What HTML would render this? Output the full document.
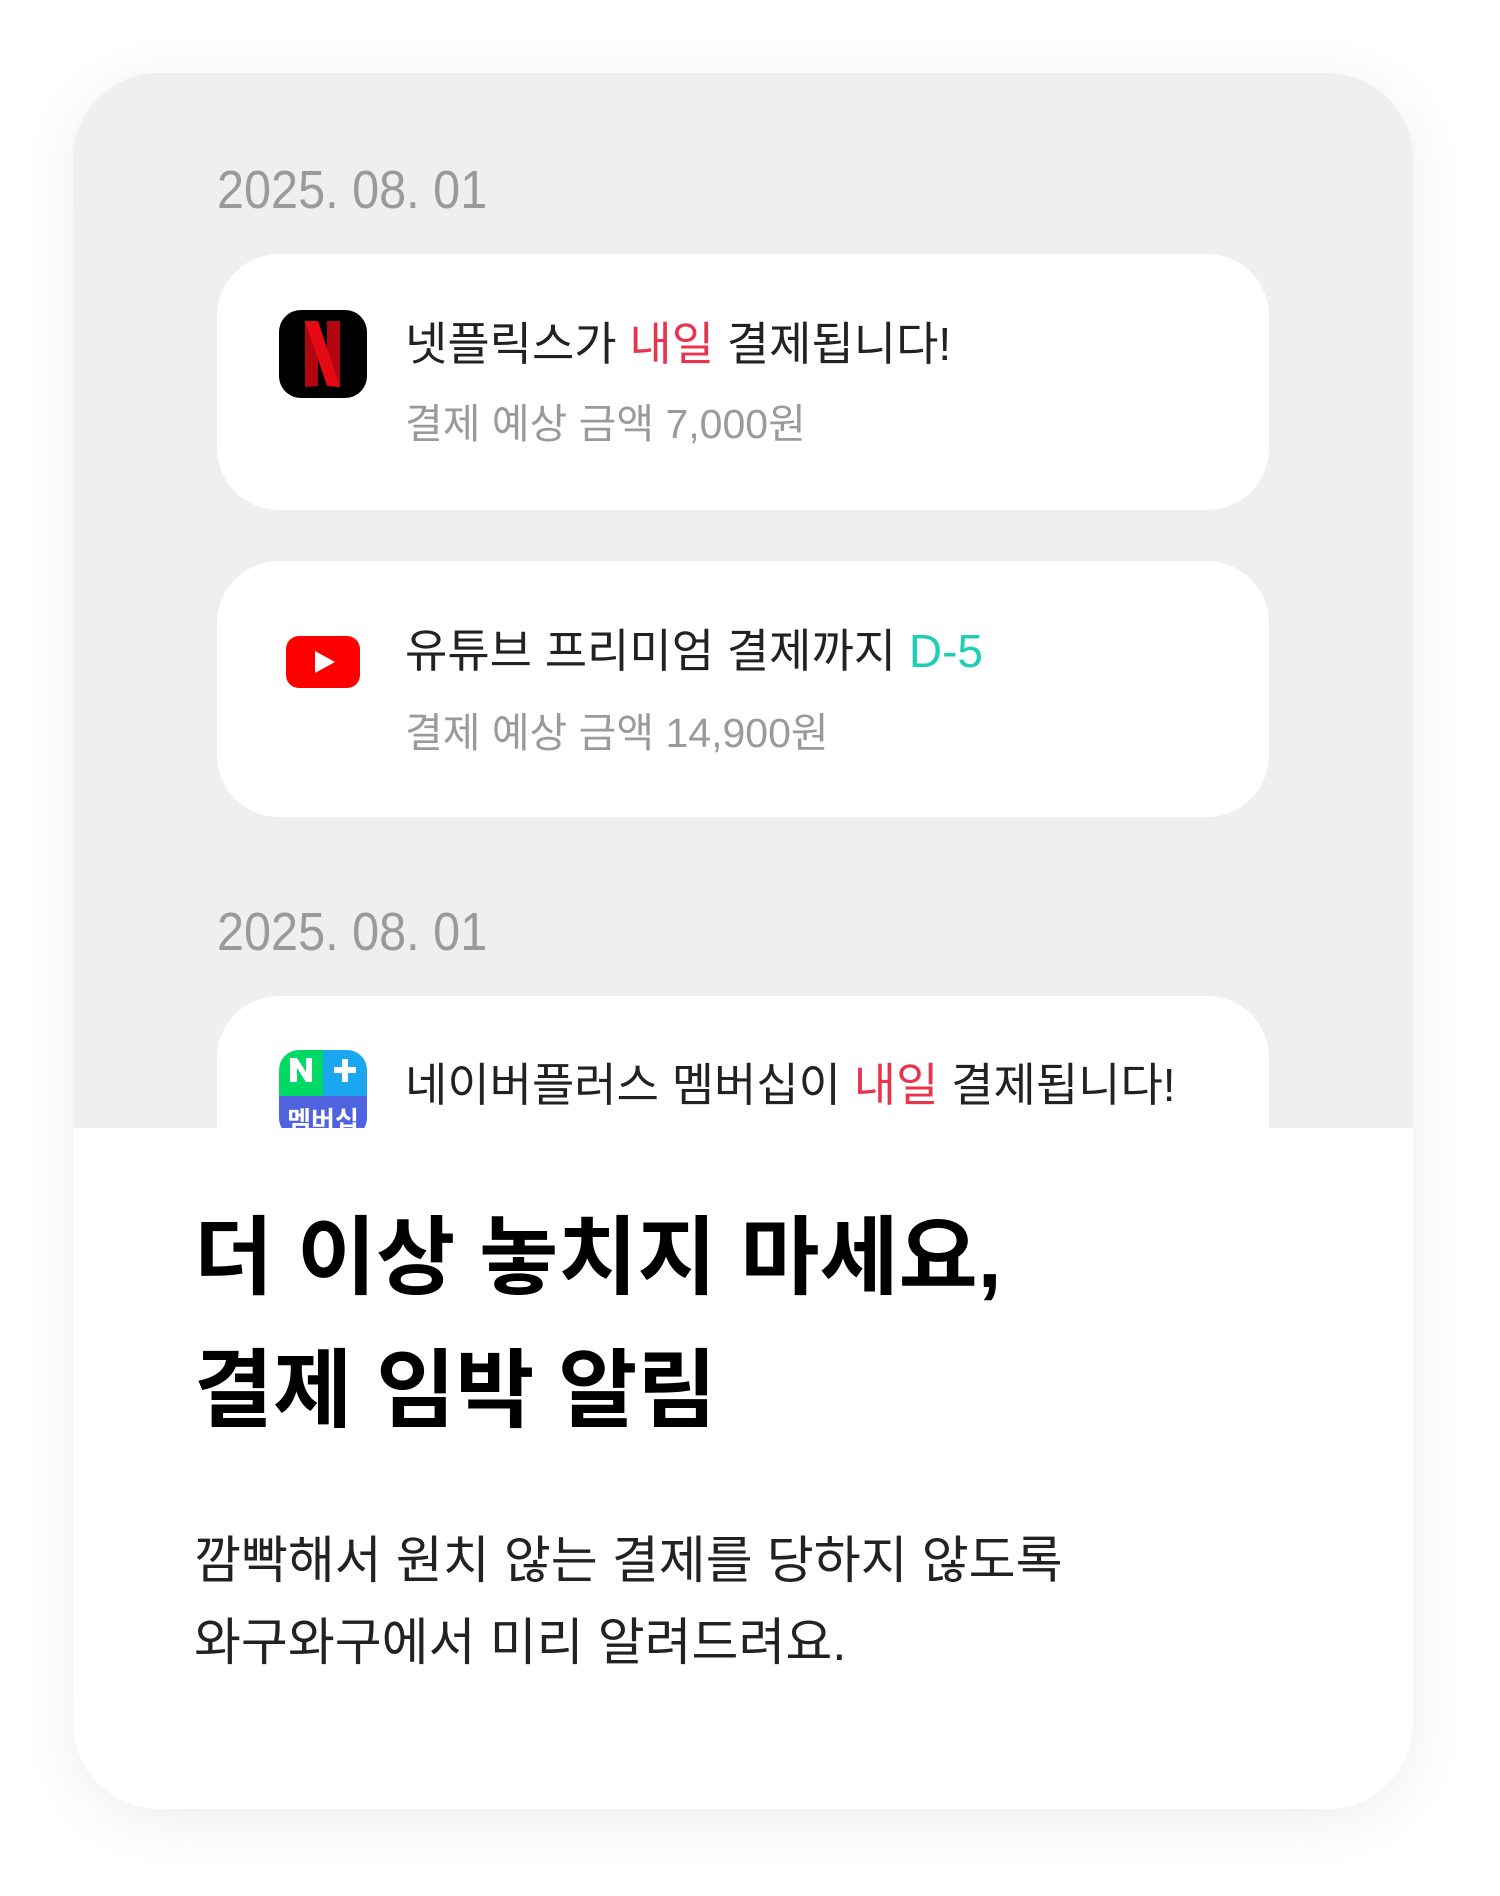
<!DOCTYPE html>
<html><head><meta charset="utf-8"><style>
*{margin:0;padding:0;box-sizing:border-box}
body{width:1500px;height:1896px;background:#fff;position:relative;overflow:hidden;font-family:"Liberation Sans","Noto Sans CJK KR",sans-serif}
.card{position:absolute;left:73px;top:73px;width:1340px;height:1736px;border-radius:86px;background:#fff;overflow:hidden;box-shadow:0 10px 60px rgba(0,0,0,0.07)}
.gray{position:absolute;left:0;top:0;width:100%;height:1055px;background:#efefef;overflow:hidden}
.t{position:absolute;white-space:nowrap;transform-origin:left center;line-height:1}
.date{color:#9a9a9a;font-size:54px;transform:scaleX(0.9)}
.note{position:absolute;left:144px;width:1052px;height:256px;background:#fff;border-radius:62px}
.title{font-size:46px;color:#222}
.sub{font-size:41px;color:#9a9a9a}
.red{color:#e8344e}.teal{color:#1fcfb5}
.h{font-size:86px;font-weight:bold;color:#000}
.b{font-size:51px;color:#222}
</style></head><body>
<div class="card">
 <div class="gray">
  <div class="t date" style="left:144px;top:90px">2025. 08. 01</div>
  <div class="note" style="top:181px">
   <svg style="position:absolute;left:62px;top:56px" width="88" height="88" viewBox="0 0 88 88"><rect width="88" height="88" rx="22" fill="#000"/><path d="M26 11h13v65l-13 1z" fill="#b1060f"/><path d="M48 11h13v66l-13-1z" fill="#b1060f"/><path d="M26 11h13l22 66-13-1z" fill="#e50914"/></svg>
   <div class="t title" style="left:188px;top:67px">넷플릭스가 <span class="red">내일</span> 결제됩니다!</div>
   <div class="t sub" style="left:188px;top:150px">결제 예상 금액 7,000원</div>
  </div>
  <div class="note" style="top:488px">
   <svg style="position:absolute;left:69px;top:75px" width="74" height="52" viewBox="0 0 74 52"><rect width="74" height="52" rx="13" fill="#f00"/><path d="M29 15v22l20-11z" fill="#fff"/></svg>
   <div class="t title" style="left:188px;top:67px">유튜브 프리미엄 결제까지 <span class="teal">D-5</span></div>
   <div class="t sub" style="left:188px;top:152px">결제 예상 금액 14,900원</div>
  </div>
  <div class="t date" style="left:144px;top:832px">2025. 08. 01</div>
  <div class="note" style="top:923px">
   <svg style="position:absolute;left:62px;top:54px" width="88" height="88" viewBox="0 0 88 88"><defs><clipPath id="c"><rect width="88" height="88" rx="20"/></clipPath></defs><g clip-path="url(#c)"><rect width="44" height="46" fill="#00d964"/><rect x="44" width="44" height="46" fill="#1aa7f0"/><rect y="46" width="88" height="42" fill="#4f63e0"/><path d="M11 8h7l9 14V8h6v24h-6l-9-14v14h-7z" fill="#fff"/><path d="M55 17h8V9h6v8h8v6h-8v9h-6v-9h-8z" fill="#fff"/><text x="44" y="80" font-size="26" font-weight="bold" fill="#fff" text-anchor="middle" font-family="Noto Sans CJK KR,sans-serif">멤버십</text></g></svg>
   <div class="t title" style="left:188px;top:66px">네이버플러스 멤버십이 <span class="red">내일</span> 결제됩니다!</div>
  </div>
 </div>
 <div class="t h" style="left:121px;top:1142px">더 이상 놓치지 마세요,</div>
 <div class="t h" style="left:121px;top:1275px">결제 임박 알림</div>
 <div class="t b" style="left:121px;top:1462px">깜빡해서 원치 않는 결제를 당하지 않도록</div>
 <div class="t b" style="left:121px;top:1544px">와구와구에서 미리 알려드려요.</div>
</div>
</body></html>
